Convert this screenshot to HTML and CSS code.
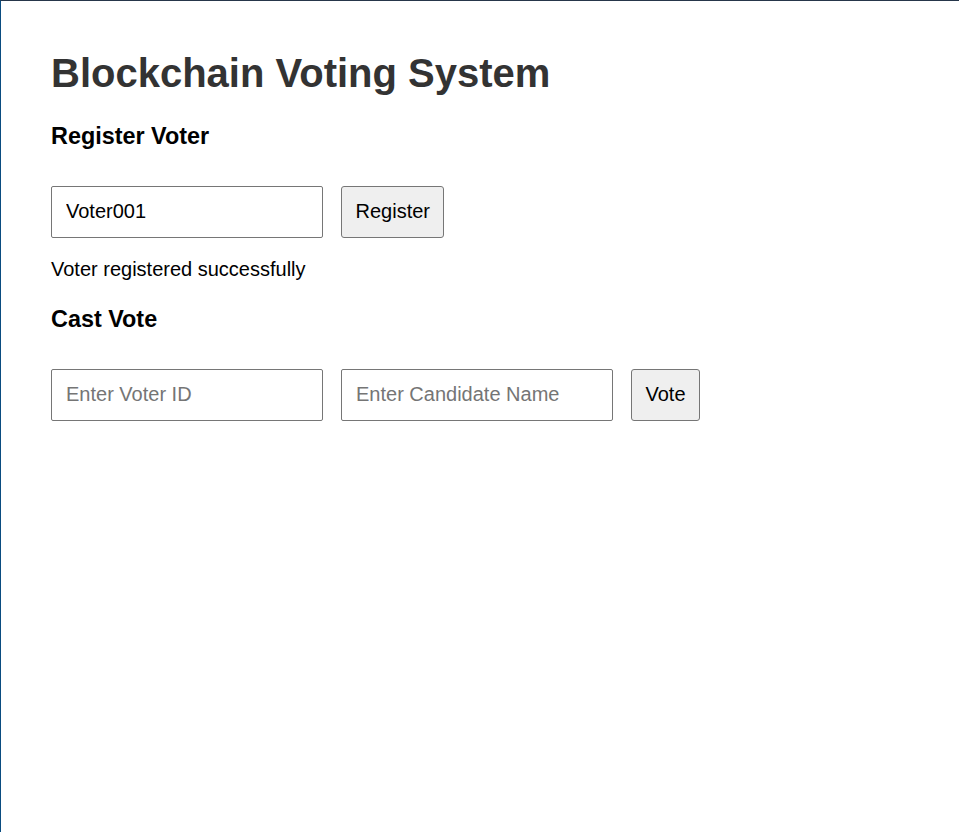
FILE: index.html
```html
<!DOCTYPE html>
<html lang="en">
<head>
<meta charset="utf-8">
<title>Blockchain Voting System</title>
<link rel="stylesheet" href="styles.css">
</head>
<body>
<div class="page">
  <h1 class="title">Blockchain Voting System</h1>

  <section class="section">
    <h3 class="section-title">Register Voter</h3>
    <div class="row">
      <input class="field" type="text" value="Voter001" placeholder="Enter Voter ID">
      <button class="btn" type="button">Register</button>
    </div>
    <p class="status">Voter registered successfully</p>
  </section>

  <section class="section">
    <h3 class="section-title">Cast Vote</h3>
    <div class="row">
      <input class="field" type="text" placeholder="Enter Voter ID">
      <input class="field" type="text" placeholder="Enter Candidate Name">
      <button class="btn" type="button">Vote</button>
    </div>
  </section>
</div>
</body>
</html>
```

FILE: styles.css
```css
html, body {
  margin: 0;
  padding: 0;
  background: #ffffff;
}

body {
  font-family: "Liberation Sans", Arial, sans-serif;
  color: #000000;
}

.page {
  min-height: 100vh;
  box-sizing: border-box;
  border-top: 1px solid #26364a;
  border-left: 1px solid #0a4c80;
  padding: 49px 50px 0 50px;
}

.title {
  margin: 0 0 27px 0;
  font-size: 40px;
  font-weight: bold;
  line-height: 46px;
  color: #333333;
}

.section-title {
  margin: 0 0 36px 0;
  font-size: 23.4px;
  font-weight: bold;
  line-height: 27px;
}

.row {
  display: flex;
  gap: 18px;
  align-items: stretch;
}

.field {
  box-sizing: border-box;
  width: 272px;
  height: 52px;
  margin: 0;
  padding: 0 14px 1px 14px;
  font-family: "Liberation Sans", Arial, sans-serif;
  font-size: 20px;
  color: #000000;
  border: 1px solid #767676;
  border-radius: 2px;
  background: #ffffff;
  outline: none;
}

.field::placeholder {
  color: #757575;
  opacity: 1;
}

.btn {
  box-sizing: border-box;
  height: 52px;
  margin: 0;
  padding: 0 13.5px 1px 13.5px;
  font-family: "Liberation Sans", Arial, sans-serif;
  font-size: 20px;
  color: #000000;
  background: #efefef;
  border: 1px solid #767676;
  border-radius: 3px;
}

.status {
  margin: 20px 0 25px 0;
  font-size: 20px;
  line-height: 23px;
}
```
